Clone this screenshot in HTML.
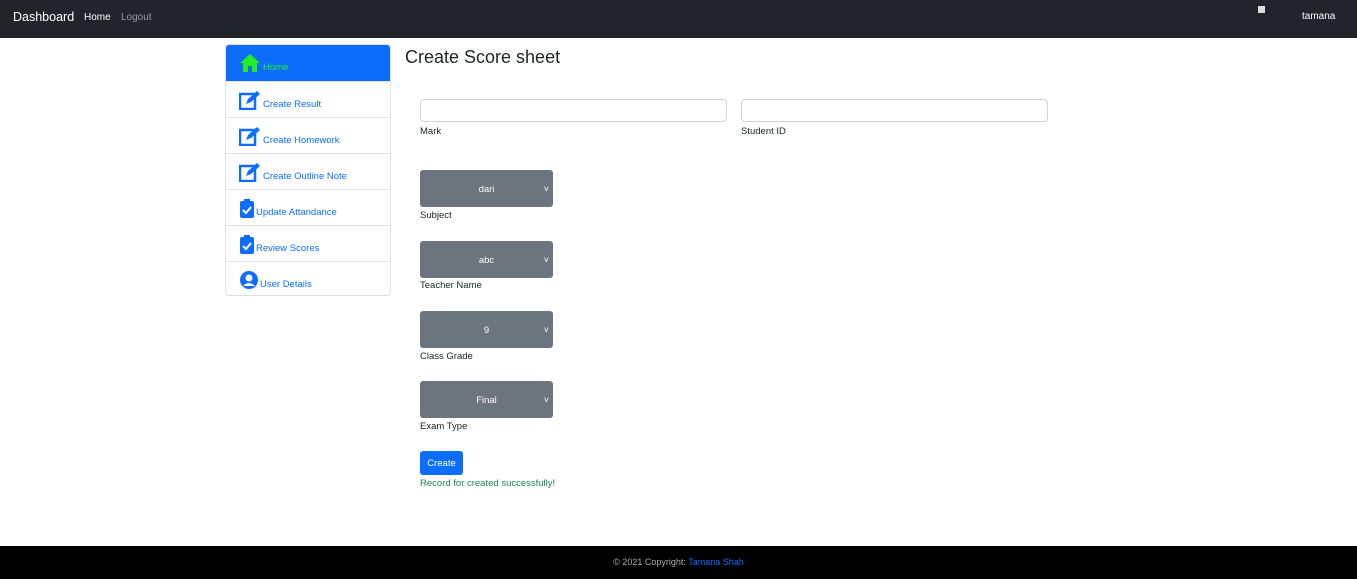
<!DOCTYPE html>
<html><head><style>
body{margin:0;width:1357px;height:579px;position:relative;font-family:"Liberation Sans",sans-serif;background:#fff;overflow:hidden}
.nav{position:absolute;top:0;left:0;width:1357px;height:38px;background:#212529;color:#fff}
.abs{position:absolute;white-space:nowrap}
.side{position:absolute;left:225px;top:44px;width:164px;height:250px;border:1px solid #dee2e6;border-radius:4px;overflow:hidden}
.item{height:35px;border-bottom:1px solid #dee2e6;position:relative;color:#0d6efd;font-size:9.5px}
.item span{position:absolute;left:37px;top:17px}
.input{position:absolute;height:21px;border:1px solid #ced4da;border-radius:4px}
.lbl{position:absolute;font-size:9.5px;color:#212529}
.sel{position:absolute;left:420px;width:133px;height:37px;background:#6c757d;border-radius:3px;color:#fff;font-size:9.5px;text-align:center;line-height:40px}
.sel:after{content:"˅";position:absolute;right:4px;top:0;font-size:9px;line-height:38px}
svg{position:absolute}
</style></head><body>
<div class="nav">
<div class="abs" style="left:13px;top:10px;font-size:12.5px">Dashboard</div>
<div class="abs" style="left:84px;top:12px;font-size:10px">Home</div>
<div class="abs" style="left:121px;top:12px;font-size:10px;color:#999">Logout</div>
<div class="abs" style="left:1258px;top:6px;width:7px;height:7px;background:#ddd"></div>
<div class="abs" style="left:1302px;top:11px;font-size:10px">tamana</div>
</div>
<div class="side">
<div class="item" style="background:#0d6efd;height:36px;color:#22ee22"><svg style="left:13px;top:8px" width="22" height="20" viewBox="0 0 22 20"><path d="M11 1L1 10h3v9h5v-6h4v6h5v-9h3z" fill="#22ee22"/></svg><span style="top:17px">Home</span></div>
<div class="item"><svg style="left:13px;top:8px" width="22" height="20"><rect x="1" y="4" width="15" height="15" fill="none" stroke="#0d6efd" stroke-width="2.5"/><path d="M7 14l2-5 9-8 3 3-9 8z" fill="#0d6efd"/></svg><span>Create Result</span></div>
<div class="item"><svg style="left:13px;top:8px" width="22" height="20"><rect x="1" y="4" width="15" height="15" fill="none" stroke="#0d6efd" stroke-width="2.5"/><path d="M7 14l2-5 9-8 3 3-9 8z" fill="#0d6efd"/></svg><span>Create Homework</span></div>
<div class="item"><svg style="left:13px;top:8px" width="22" height="20"><rect x="1" y="4" width="15" height="15" fill="none" stroke="#0d6efd" stroke-width="2.5"/><path d="M7 14l2-5 9-8 3 3-9 8z" fill="#0d6efd"/></svg><span>Create Outline Note</span></div>
<div class="item"><svg style="left:13px;top:8px" width="16" height="20"><rect x="1" y="3" width="14" height="17" rx="2" fill="#0d6efd"/><rect x="5" y="1" width="6" height="4" fill="#0d6efd"/><path d="M4 12l3 3 5-6" stroke="#fff" stroke-width="2" fill="none"/></svg><span style="left:30px">Update Attandance</span></div>
<div class="item"><svg style="left:13px;top:8px" width="16" height="20"><rect x="1" y="3" width="14" height="17" rx="2" fill="#0d6efd"/><rect x="5" y="1" width="6" height="4" fill="#0d6efd"/><path d="M4 12l3 3 5-6" stroke="#fff" stroke-width="2" fill="none"/></svg><span style="left:30px">Review Scores</span></div>
<div class="item" style="border:0"><svg style="left:13px;top:8px" width="20" height="20"><circle cx="10" cy="10" r="9" fill="#0d6efd"/><circle cx="10" cy="8" r="3.5" fill="#fff"/><path d="M4 16q6-6 12 0" fill="#fff"/></svg><span style="left:34px">User Details</span></div>
</div>
<div class="abs" style="left:405px;top:47px;font-size:18px;color:#212529">Create Score sheet</div>
<div class="input" style="left:420px;top:99px;width:305px"></div>
<div class="input" style="left:741px;top:99px;width:305px"></div>
<div class="lbl" style="left:420px;top:126px">Mark</div>
<div class="lbl" style="left:741px;top:126px">Student ID</div>
<div class="sel" style="top:170px">dari</div><div class="lbl" style="left:420px;top:210px">Subject</div>
<div class="sel" style="top:241px">abc</div><div class="lbl" style="left:420px;top:280px">Teacher Name</div>
<div class="sel" style="top:311px">9</div><div class="lbl" style="left:420px;top:351px">Class Grade</div>
<div class="sel" style="top:381px">Final</div><div class="lbl" style="left:420px;top:421px">Exam Type</div>
<div class="abs" style="left:420px;top:451px;width:43px;height:24px;background:#0d6efd;border-radius:3px;color:#fff;font-size:9.5px;text-align:center;line-height:26px">Create</div>
<div class="lbl" style="left:420px;top:478px;color:#198754">Record for created successfully!</div>
<div class="abs" style="left:0;top:546px;width:1357px;height:33px;background:#000;color:#aaa;font-size:9px;text-align:center;line-height:33px">© 2021 Copyright: <span style="color:#0d6efd">Tamana Shah</span></div>
</body></html>
